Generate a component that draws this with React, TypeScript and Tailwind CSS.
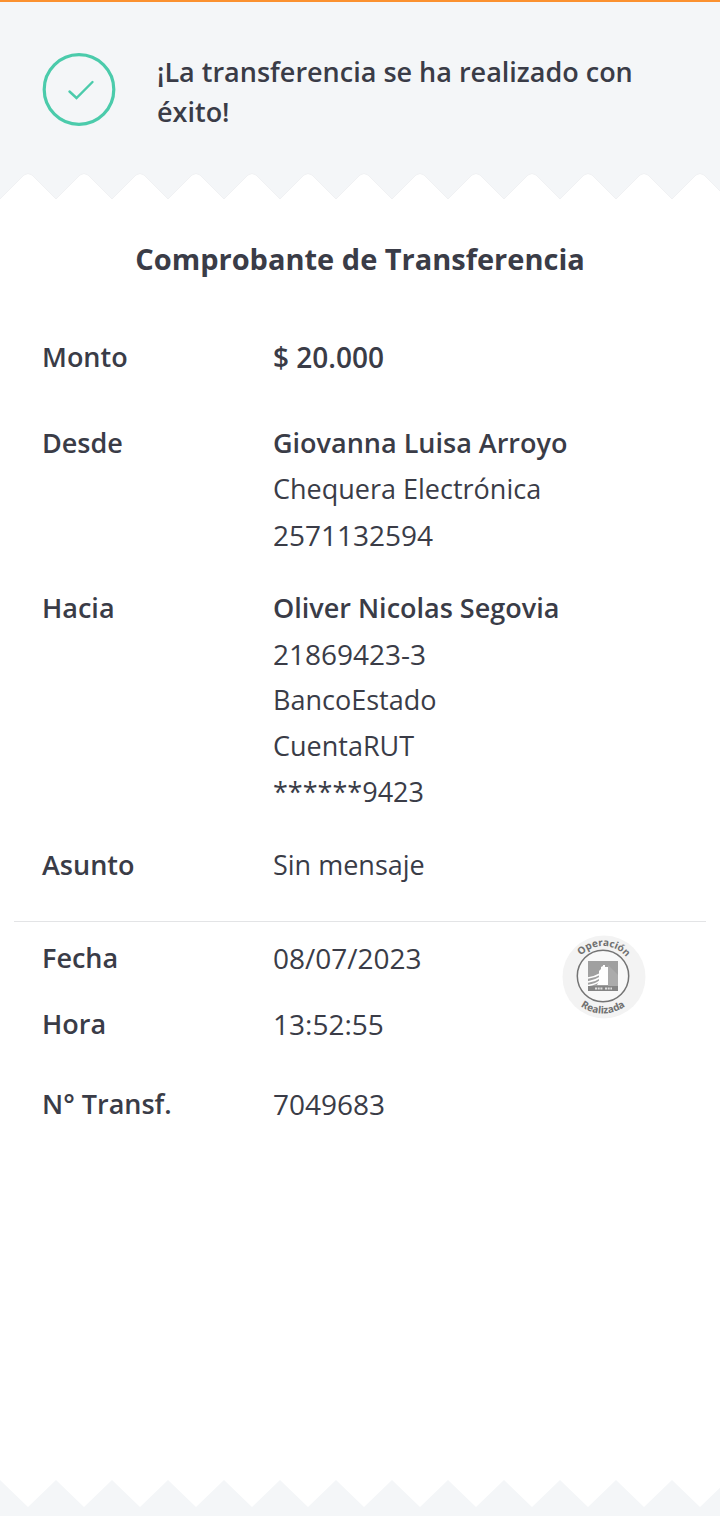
import type { ReactNode } from "react";

function CheckCircle() {
  return (
    <svg viewBox="0 0 74 74" className="size-[74px] shrink-0" fill="none" stroke="#4bcbab" aria-hidden="true">
      <circle cx="37" cy="37.5" r="34.8" strokeWidth="3.2" />
      <path d="M27.5 39.5 L34.5 46 L50.5 30" strokeWidth="2.4" strokeLinecap="round" />
    </svg>
  );
}

function TornTop() {
  return (
    <svg className="block h-7 w-full" aria-hidden="true">
      <defs>
        <pattern id="torn-top" width="56" height="28" patternUnits="userSpaceOnUse">
          <path d="M0 0 H56 V27 L32 3 Q28 0 24 3 L0 27 Z" fill="#f4f6f8" />
          <path d="M0 27 L24 3 Q28 0 32 3 L56 27" fill="none" stroke="#f0f1f3" />
        </pattern>
      </defs>
      <rect width="100%" height="28" fill="url(#torn-top)" />
    </svg>
  );
}

function TornBottom() {
  return (
    <svg className="block h-9 w-full" aria-hidden="true">
      <defs>
        <pattern id="torn-bottom" width="56" height="36" patternUnits="userSpaceOnUse">
          <path d="M0 0 L28 27 L56 0 V36 H0 Z" fill="#f4f6f8" />
        </pattern>
      </defs>
      <rect width="100%" height="36" fill="url(#torn-bottom)" />
    </svg>
  );
}

function Seal() {
  return (
    <svg viewBox="0 0 84 84" className="size-[84px] overflow-visible" role="img" aria-label="Operación Realizada">
      <defs>
        <path id="seal-upper" d="M11 41 A30 30 0 0 1 71 41" />
        <path id="seal-lower" d="M3.5 41 A37.5 37.5 0 0 0 78.5 41" />
      </defs>
      <circle cx="42" cy="42" r="41.5" fill="#f3f3f3" />
      <circle cx="41" cy="41" r="25.7" fill="#f8f8f8" stroke="#747474" strokeWidth="1.5" />
      <rect x="26" y="26" width="30" height="30" fill="#a0a0a0" />
      <path d="M46 30 L56 40 V51 H46 Z" fill="#ababab" />
      <path d="M37 36 L39 34 V32 L41 31 V30 H43 V32 H46 V50 H35 L37 46 Z" fill="#fff" />
      <path d="M26 43 Q33 42 38 39 M26 47 Q33 46 39 42 M26 50.5 Q34 49.5 39 45" fill="none" stroke="#fff" strokeWidth="1.6" />
      <rect x="26" y="51" width="30" height="5" fill="#858585" />
      <path d="M33 53.5 H41 M43 53.5 H50" stroke="#dedede" strokeWidth="1.8" strokeDasharray="2 .7" />
      <g fill="#707070" fontSize="10" fontWeight="700" fontFamily="Noto Sans, sans-serif" textAnchor="middle">
        <text>
          <textPath href="#seal-upper" startOffset="51%">Operación</textPath>
        </text>
        <text>
          <textPath href="#seal-lower" startOffset="50%">Realizada</textPath>
        </text>
      </g>
    </svg>
  );
}

function Row({ label, children }: { label: string; children: ReactNode }) {
  return (
    <div className="flex">
      <dt className="w-[231px] shrink-0 font-semibold">{label}</dt>
      <dd className="min-w-0 flex-1">{children}</dd>
    </div>
  );
}

function Figure({ children }: { children: ReactNode }) {
  return <p className="text-[28px] leading-[46px]">{children}</p>;
}

export default function App() {
  return (
    <div className="flex min-h-screen flex-col bg-white font-['Open_Sans','Noto_Sans',sans-serif] text-[27px] leading-[46px] text-[#3a3c47]">
      <header className="border-t-2 border-[#fb9130] bg-[#f4f6f8] px-[42px] pt-[50px] pb-10">
        <div className="flex items-start gap-[41px]">
          <CheckCircle />
          <p className="leading-10 font-semibold">¡La transferencia se ha realizado con éxito!</p>
        </div>
      </header>
      <TornTop />
      <main className="flex-1">
        <h1 className="mt-9 text-center text-[29px] leading-[46px] font-bold">Comprobante de Transferencia</h1>
        <dl className="mt-[52px] px-[42px]">
          <Row label="Monto">
            <p className="text-[28px] leading-[46px] font-semibold">$ 20.000</p>
          </Row>
          <div className="mt-10 flex flex-col gap-[27px]">
            <Row label="Desde">
              <p className="font-semibold">Giovanna Luisa Arroyo</p>
              <p>Chequera Electrónica</p>
              <Figure>2571132594</Figure>
            </Row>
            <Row label="Hacia">
              <p className="font-semibold">Oliver Nicolas Segovia</p>
              <Figure>21869423-3</Figure>
              <p>BancoEstado</p>
              <p>CuentaRUT</p>
              <p>******9423</p>
            </Row>
            <Row label="Asunto">Sin mensaje</Row>
          </div>
        </dl>
        <hr className="mx-[14px] mt-[33px] border-[#e3e4e6]" />
        <div className="flex items-start justify-between pt-[13px] pr-[74px] pl-[42px]">
          <dl>
            <Row label="Fecha">
              <Figure>08/07/2023</Figure>
            </Row>
            <div className="mt-5">
              <Row label="Hora">
                <Figure>13:52:55</Figure>
              </Row>
            </div>
            <div className="mt-[34px]">
              <Row label="N° Transf.">
                <Figure>7049683</Figure>
              </Row>
            </div>
          </dl>
          <Seal />
        </div>
      </main>
      <footer>
        <TornBottom />
      </footer>
    </div>
  );
}
